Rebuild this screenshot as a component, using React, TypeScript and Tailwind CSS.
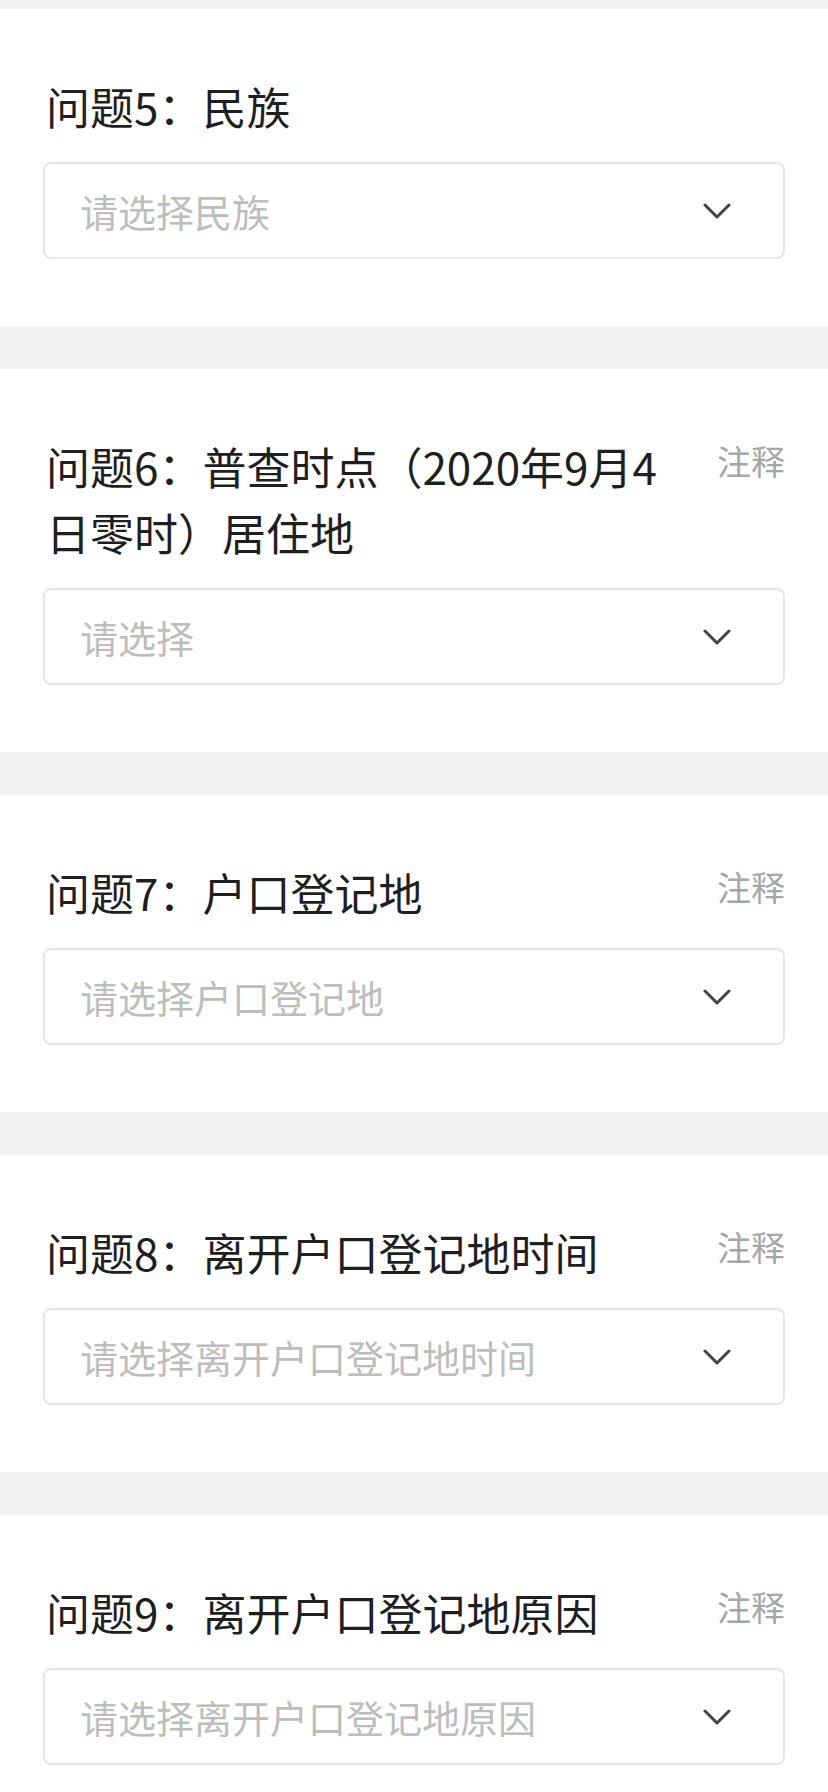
const questions = [
  { label: "问题5：民族", placeholder: "请选择民族", note: false },
  { label: "问题6：普查时点（2020年9月4日零时）居住地", placeholder: "请选择", note: true },
  { label: "问题7：户口登记地", placeholder: "请选择户口登记地", note: true },
  { label: "问题8：离开户口登记地时间", placeholder: "请选择离开户口登记地时间", note: true },
  { label: "问题9：离开户口登记地原因", placeholder: "请选择离开户口登记地原因", note: true },
];

function Chevron() {
  return (
    <svg width="28" height="16" viewBox="0 0 28 16" fill="none" className="shrink-0">
      <path d="M2 2l12 12L26 2" stroke="#444" strokeWidth="3" strokeLinecap="round" strokeLinejoin="round" />
    </svg>
  );
}

export default function App() {
  return (
    <div
      className="w-[828px] h-[1792px] overflow-hidden bg-[#f3f3f3] pt-[9px] flex flex-col gap-[43px]"
      style={{ fontFamily: '"Noto Sans CJK SC", "Noto Sans", sans-serif' }}
    >
      {questions.map((q) => (
        <div key={q.label} className="bg-white px-[43px] pt-[64px] pb-[67px] shrink-0">
          <div className="flex items-start justify-between gap-6">
            <h3 className="text-[44px] leading-[66px] text-[#1f1f1f] font-normal pl-[3px]">{q.label}</h3>
            {q.note && (
              <span className="shrink-0 text-[34px] leading-[56px] text-[#a6a6a6]">注释</span>
            )}
          </div>
          <div className="mt-[23px] h-[97px] border-2 border-[#e6e6e6] rounded-[8px] flex items-center justify-between pl-[35px] pr-[52px]">
            <span className="text-[38px] text-[#bdbdbd]">{q.placeholder}</span>
            <Chevron />
          </div>
        </div>
      ))}
    </div>
  );
}
